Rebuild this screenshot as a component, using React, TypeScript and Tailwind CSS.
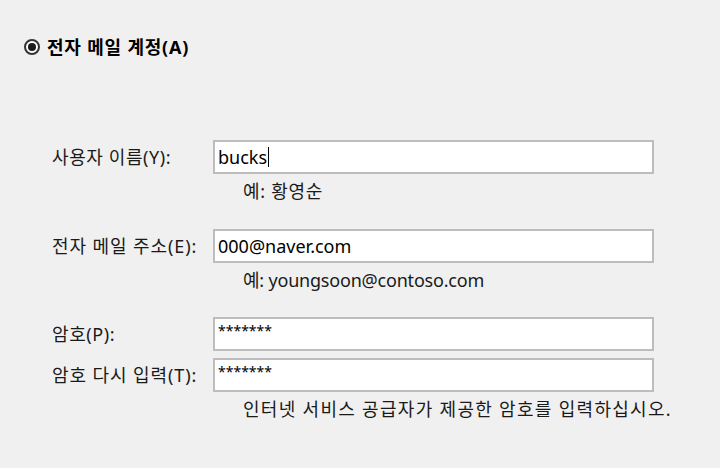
const font = "font-['Noto_Sans','Noto_Sans_CJK_KR',sans-serif]";

function Field({ value, caret = false, small = false }: { value: string; caret?: boolean; small?: boolean }) {
    return (
        <div className="flex h-[34px] w-[441px] items-center border-2 border-[#bdbdbd] bg-white pl-[3px]">
            {small ? (
                <span className="-mt-[6px] text-[14px] leading-none text-black">{value}</span>
            ) : (
                <span className="flex items-center text-[18px] leading-none text-black">
                    {value}
                    {caret && <span className="ml-px inline-block h-[20px] w-px bg-black" />}
                </span>
            )}
        </div>
    );
}

function Label({ children, track }: { children: React.ReactNode; track: string }) {
    return <div className={`flex items-center whitespace-nowrap text-[18px] ${track}`}>{children}</div>;
}

export default function App() {
    return (
        <div className={`h-[468px] w-[720px] overflow-hidden bg-[#f0f0f0] ${font} text-[#1a1a1a]`}>
            {/* radio */}
            <div className="flex items-center gap-[7px] pl-[24px] pt-[38px]">
                <span className="flex h-[16px] w-[16px] items-center justify-center rounded-full border-2 border-[#333] bg-white">
                    <span className="h-[8px] w-[8px] rounded-full bg-[#1a1a1a]" />
                </span>
                <span className="text-[18px] font-bold leading-[18px] tracking-[0.8px] text-black">전자 메일 계정(A)</span>
            </div>

            <div className="grid grid-cols-[161px_441px] pl-[52px] pt-[84px]">
                <Label track="tracking-[0.6px]">사용자 이름(Y):</Label>
                <Field value="bucks" caret />
                <div />
                <div className="mt-[7px] mb-[28px] pl-[30px] text-[18px] leading-[20px] tracking-[0.7px]">
                    예: 황영순
                </div>

                <Label track="tracking-[0.9px]">전자 메일 주소(E):</Label>
                <Field value="000@naver.com" />
                <div />
                <div className="mt-[7px] mb-[27px] pl-[30px] text-[18px] leading-[20px] tracking-[-0.2px]">
                    예: youngsoon@contoso.com
                </div>

                <Label track="tracking-[0.6px]">암호(P):</Label>
                <Field value="*******" small />
                <div className="h-[7px]" />
                <div className="h-[7px]" />

                <Label track="tracking-[0.9px]">암호 다시 입력(T):</Label>
                <Field value="*******" small />
                <div />
                <div className="mt-[7px] whitespace-nowrap pl-[30px] text-[18px] leading-[20px] tracking-[1.3px]">
                    인터넷 서비스 공급자가 제공한 암호를 입력하십시오.
                </div>
            </div>
        </div>
    );
}
